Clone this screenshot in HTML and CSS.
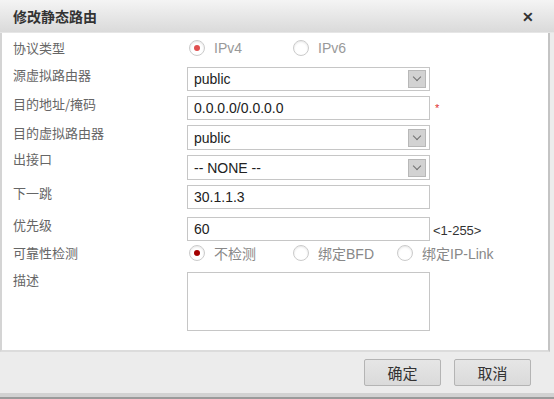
FILE: index.html
```html
<!DOCTYPE html>
<html lang="zh-CN">
<head>
    <meta charset="UTF-8">
    <title>修改静态路由</title>
    <link rel="stylesheet" href="styles.css">
</head>
<body>
    <div class="dialog">
        <div class="dialog-title">
            <span>修改静态路由</span>
            <span class="close">✕</span>
        </div>

        <div class="panel">
            <div class="form">
                <div class="label">协议类型</div>
                <div class="ctrl radios">
                    <label class="radio disabled checked"><i></i>IPv4</label>
                    <label class="radio disabled"><i></i>IPv6</label>
                </div>

                <div class="label gap-top">源虚拟路由器</div>
                <div class="ctrl gap-top">
                    <div class="select"><span>public</span><b></b></div>
                </div>

                <div class="label">目的地址/掩码</div>
                <div class="ctrl">
                    <div class="input">0.0.0.0/0.0.0.0</div>
                    <span class="req">*</span>
                </div>

                <div class="label">目的虚拟路由器</div>
                <div class="ctrl">
                    <div class="select tall"><span>public</span><b></b></div>
                </div>

                <div class="label up">出接口</div>
                <div class="ctrl">
                    <div class="select tall"><span>-- NONE --</span><b></b></div>
                </div>

                <div class="label">下一跳</div>
                <div class="ctrl">
                    <div class="input">30.1.1.3</div>
                </div>

                <div class="label gap-mid">优先级</div>
                <div class="ctrl gap-mid">
                    <div class="input">60</div>
                    <span class="hint">&lt;1-255&gt;</span>
                </div>

                <div class="label tight">可靠性检测</div>
                <div class="ctrl radios tight">
                    <label class="radio checked"><i></i>不检测</label>
                    <label class="radio"><i></i>绑定BFD</label>
                    <label class="radio"><i></i>绑定IP-Link</label>
                </div>

                <div class="label gap-top">描述</div>
                <div class="ctrl gap-top">
                    <div class="textarea"></div>
                </div>
            </div>
        </div>

        <div class="footer">
            <button class="btn">确定</button>
            <button class="btn">取消</button>
        </div>
    </div>
</body>
</html>
```

FILE: styles.css
```css
body, html {
    margin: 0;
    padding: 0;
    background-color: #9a9a9a;
    font-family: "Liberation Sans", "Noto Sans CJK SC", sans-serif;
}
.dialog {
    width: 554px;
    height: 393px;
    background-color: #ececec;
    border-bottom: 4px solid #d2d2d2;
    display: flex;
    flex-direction: column;
}
.dialog-title {
    height: 32px;
    padding: 0 20px 0 13px;
    display: flex;
    align-items: center;
    justify-content: space-between;
    background: linear-gradient(#f4f4f4, #dadada);
    border-bottom: 1px solid #e6e6e6;
    font-family: "Noto Sans CJK SC", sans-serif;
    font-size: 14px;
    font-weight: bold;
    color: #333;
}
.close {
    font-size: 14px;
    font-weight: bold;
    color: #333;
}
.panel {
    height: 310px;
    margin: 0 4px 0 0;
    background-color: #fff;
    border-left: 2px solid #d4d4d4;
    border-right: 2px solid #c4c4c4;
    border-bottom: 2px solid #dcdcdc;
    padding-top: 7px;
}
.form {
    display: grid;
    grid-template-columns: 174px 1fr;
    row-gap: 5px;
    padding-left: 11px;
}
.label {
    font-family: "Noto Sans CJK SC", sans-serif;
    font-size: 13px;
    line-height: 16px;
    color: #666;
}
.label.up {
    margin-top: -4px;
    padding-bottom: 4px;
}
.ctrl {
    display: flex;
    align-items: center;
}
.gap-top { margin-top: 6px; }
.gap-mid { margin-top: 3px; }
.tight { margin-top: -1px; }
.radios {
    height: 16px;
}
.radio {
    display: flex;
    align-items: center;
    width: 104px;
    font-size: 14px;
    color: #888;
    font-family: "Liberation Sans", "Noto Sans CJK SC", sans-serif;
}
.radio i {
    width: 16px;
    height: 16px;
    margin: 0 9px 0 2px;
    border: 1px solid #cbcbcb;
    border-radius: 50%;
    box-sizing: border-box;
    display: flex;
    align-items: center;
    justify-content: center;
    box-shadow: inset 0 1px 2px rgba(0, 0, 0, 0.1);
}
.radio.checked i::after {
    content: "";
    width: 6px;
    height: 6px;
    border-radius: 50%;
    background-color: #a40000;
}
.radio.disabled {
    color: #999;
}
.radio.disabled.checked i::after {
    background-color: #e05050;
}
.select, .input, .textarea {
    width: 243px;
    height: 24px;
    box-sizing: border-box;
    border: 1px solid #c6c6c6;
    background-color: #fff;
    font-size: 14px;
    color: #222;
    padding-left: 6px;
    display: flex;
    align-items: center;
}
.select.tall {
    height: 25px;
}
.select span {
    flex: 1;
}
.select b {
    width: 18px;
    height: 18px;
    margin-right: 3px;
    border: 1px solid #b8b8b8;
    background-color: #d2d2d2;
    box-sizing: border-box;
    position: relative;
}
.select b::after {
    content: "";
    position: absolute;
    left: 5px;
    top: 3px;
    width: 5px;
    height: 5px;
    border-right: 1.5px solid #707070;
    border-bottom: 1.5px solid #707070;
    transform: rotate(45deg);
}
.textarea {
    height: 59px;
}
.req {
    color: #e03030;
    font-size: 11px;
    margin-left: 5px;
    align-self: flex-start;
    margin-top: 6px;
}
.hint {
    margin-left: 3px;
    font-size: 13px;
    color: #333;
    padding-top: 2px;
}
.footer {
    flex: 1;
    display: flex;
    justify-content: flex-end;
    align-items: center;
    gap: 13px;
    padding: 0 23px 0 0;
}
.btn {
    width: 77px;
    height: 27px;
    border: 1px solid #b4b4b4;
    border-radius: 2px;
    background: linear-gradient(#e6e6e6, #dadada);
    font-family: "Noto Sans CJK SC", sans-serif;
    font-size: 15px;
    color: #333;
    padding: 0;
}
```
